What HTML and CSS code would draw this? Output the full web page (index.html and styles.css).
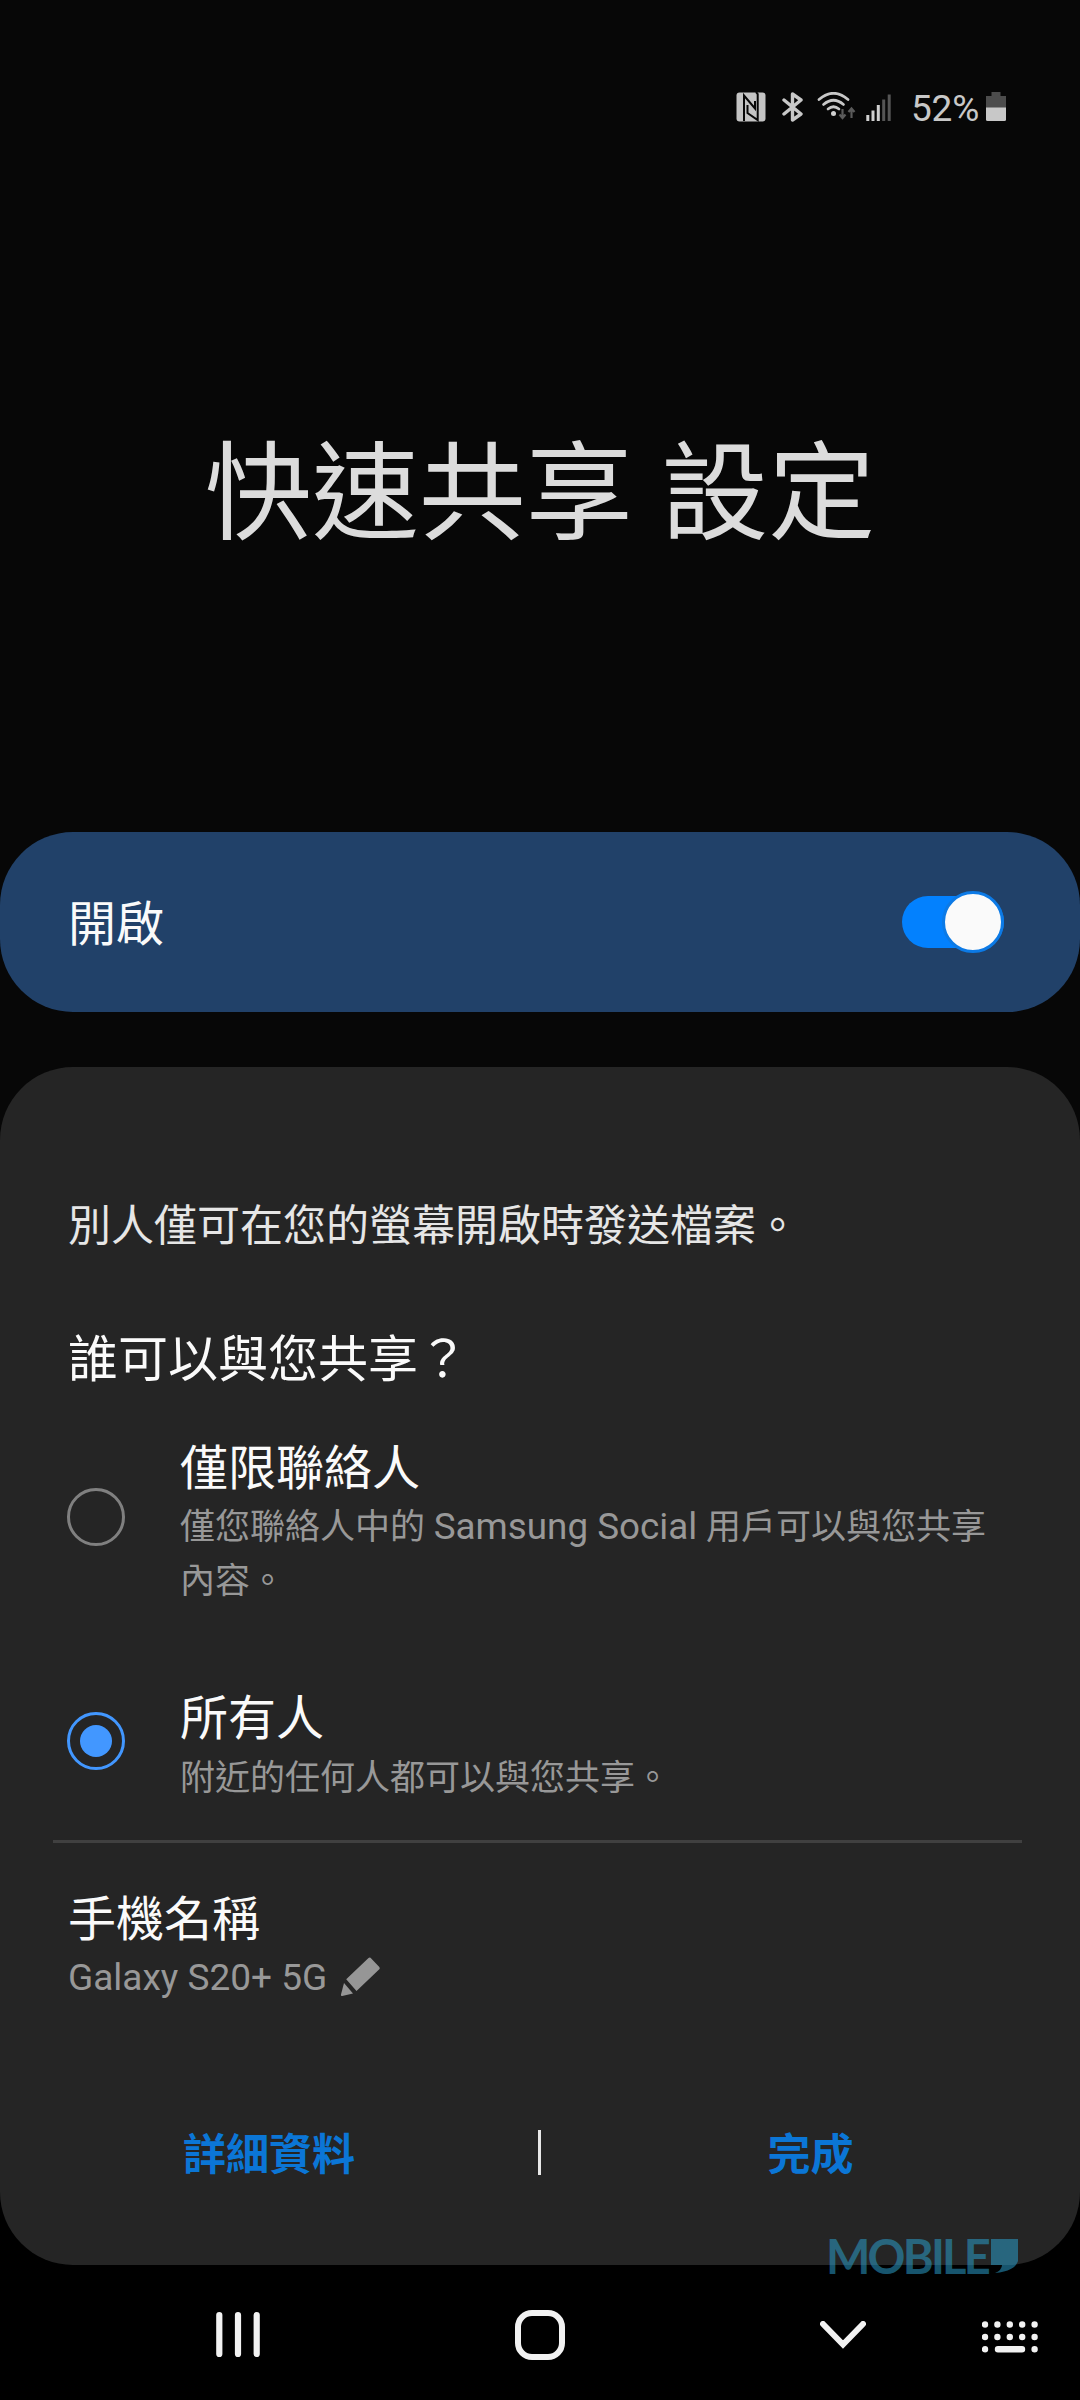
FILE: index.html
```html
<!DOCTYPE html>
<html lang="zh-Hant">
<head>
<meta charset="utf-8">
<title>快速共享 設定</title>
<link rel="stylesheet" href="styles.css">
</head>
<body>
<div class="screen">
  <header class="status-bar">
    <svg class="icon-nfc" width="30" height="30" viewBox="0 0 30 30">
      <rect x=".5" y=".5" width="29" height="29" rx="3" fill="#c4c4c4"/>
      <path d="M8 29V3.500L19 16.500V9M11.500 13V21L21.700 28V2L20 0" fill="none" stroke="#070707" stroke-width="2"/>
    </svg>
    <svg class="icon-bluetooth" width="22" height="30" viewBox="0 0 22 30">
      <path d="M2 8L19 22L10.500 28V2L19 8L2 22" fill="none" stroke="#c8c8c8" stroke-width="3.400" stroke-linejoin="round" stroke-linecap="round"/>
    </svg>
    <svg class="icon-wifi" width="39" height="30" viewBox="0 0 39 30">
      <g fill="none" stroke="#c8c8c8" stroke-width="2.700" stroke-linecap="round">
        <path d="M2 7.500Q16.500-5 31 7.500"/>
        <path d="M6.500 12.500Q16.500 4 26.500 12.500"/>
        <path d="M11 17Q16.500 12.500 22 17"/>
      </g>
      <circle cx="16.500" cy="21.500" r="2.500" fill="#d0d0d0"/>
      <path d="M25.500 17V25M22.500 22.500L25.500 26L28.500 22.500M34.500 26V17M31.500 20L34.500 16.500L37.500 20" fill="none" stroke="#5a5a5a" stroke-width="2.200"/>
    </svg>
    <svg class="icon-signal" width="26" height="30" viewBox="0 0 26 30">
      <path d="M1.800 23V29M7 18.500V29M12.300 13V29" stroke="#d0d0d0" stroke-width="3"/>
      <path d="M17.700 7.500V29M23.200 2.500V29" stroke="#555" stroke-width="3"/>
    </svg>
    <span class="battery-level">52%</span>
    <svg class="icon-battery" width="20" height="30" viewBox="0 0 20 30">
      <path d="M5.500 0H14.500V4H20V16H0V4H5.500Z" fill="#4c4c4c"/>
      <path d="M0 15.500H20V27.500Q20 29 18.500 29H1.500Q0 29 0 27.500Z" fill="#c8c8c8"/>
    </svg>
  </header>

  <h1 class="title">快速共享 設定</h1>

  <section class="master-switch">
    <span class="switch-label">開啟</span>
    <span class="toggle"><span class="thumb"></span></span>
  </section>

  <main class="card">
    <p class="notice">別人僅可在您的螢幕開啟時發送檔案。</p>
    <h2 class="question">誰可以與您共享？</h2>

    <div class="option option-contacts">
      <span class="radio"></span>
      <div class="option-text">
        <div class="label">僅限聯絡人</div>
        <div class="hint">僅您聯絡人中的 <span class="latin">Samsung Social</span> 用戶可以與您共享<br>內容。</div>
      </div>
    </div>

    <div class="option option-everyone">
      <span class="radio checked"></span>
      <div class="option-text">
        <div class="label">所有人</div>
        <div class="hint">附近的任何人都可以與您共享。</div>
      </div>
    </div>

    <hr class="divider">

    <div class="device">
      <div class="label">手機名稱</div>
      <div class="device-name">
        <span>Galaxy S20+ 5G</span>
        <svg width="40" height="40" viewBox="0 0 40 40" fill="#969696">
          <path d="M30.500.800Q29.500 0 28.500 1L6.200 22.200L16.500 34L39.300 12.300Q40.200 11.300 39.300 10Z"/>
          <path d="M4 26L13 36.500L2.200 39Q.700 39.200 1 37.500Z"/>
        </svg>
      </div>
    </div>

    <div class="actions">
      <span class="action">詳細資料</span>
      <span class="separator"></span>
      <span class="action">完成</span>
    </div>

    <div class="watermark">
      <span class="brand">MOBILE</span>
      <svg width="27" height="35" viewBox="0 0 27 35"><path d="M0 0H27V22Q24 32 4 34Q11 31 11 26H0Z" fill="currentColor"/></svg>
    </div>
  </main>

  <nav class="nav-bar">
    <svg class="nav-recents" width="44" height="48" viewBox="0 0 44 48">
      <path d="M3.300 4V43M22 4V43M40.700 4V43" stroke="#f2f2f2" stroke-width="6.200" stroke-linecap="round"/>
    </svg>
    <svg class="nav-home" width="50" height="50" viewBox="0 0 50 50">
      <rect x="3" y="3" width="44" height="44" rx="14" fill="none" stroke="#f2f2f2" stroke-width="6"/>
    </svg>
    <svg class="nav-back" width="46" height="28" viewBox="0 0 46 28">
      <path d="M3 3L23 23.500L43 3" fill="none" stroke="#f2f2f2" stroke-width="6" stroke-linecap="round"/>
    </svg>
    <svg class="nav-keyboard" width="56" height="32" viewBox="0 0 56 32">
      <path d="M3 3.500H53M3 16H53" stroke="#f2f2f2" stroke-width="6.400" stroke-linecap="round" stroke-dasharray="0 12.400"/>
      <path d="M3 28.300H3.010M52.600 28.300H52.610M16 28.300H40" stroke="#f2f2f2" stroke-width="6.400" stroke-linecap="round"/>
    </svg>
  </nav>
</div>
</body>
</html>
```
FILE: styles.css
```css
* {
  box-sizing: border-box;
  margin: 0;
  padding: 0;
}

body {
  background: #000;
  color: #fafafa;
  font-family: Roboto, "Noto Sans CJK TC", sans-serif;
}

svg {
  display: block;
  flex: none;
}

.screen {
  width: 1080px;
  height: 2400px;
  display: flex;
  flex-direction: column;
  background: linear-gradient(#070707 0 1400px, #000 1400px);
  overflow: hidden;
}

.status-bar {
  height: 216px;
  padding: 0 74px 2px 0;
  display: flex;
  align-items: center;
  justify-content: flex-end;
}

.icon-bluetooth { margin-left: 16px; }
.icon-wifi { margin-left: 13px; }
.icon-signal { margin-left: 10px; }

.battery-level {
  width: 68px;
  margin: 0 7px 0 19px;
  padding-top: 3px;
  color: #c8c8c8;
  font-size: 37px;
  line-height: 44px;
  letter-spacing: -0.2px;
}

.title {
  height: 616px;
  padding-top: 199px;
  text-align: center;
  font-size: 107px;
  font-weight: 400;
  line-height: 160px;
  word-spacing: 2px;
  color: #dcdcdc;
}

.master-switch {
  height: 180px;
  flex: none;
  padding: 0 76px 0 68px;
  display: flex;
  align-items: center;
  justify-content: space-between;
  border-radius: 73px;
  background: #214169;
}

.switch-label {
  font-size: 48px;
  line-height: 60px;
  padding-top: 6px;
}

.toggle {
  width: 102px;
  height: 52px;
  display: flex;
  align-items: center;
  justify-content: flex-end;
  border-radius: 26px;
  background: #0381fe;
}

.thumb {
  width: 62px;
  height: 62px;
  flex: none;
  border: 3px solid #0c7ae6;
  border-radius: 50%;
  background: #fafafa;
}

.card {
  position: relative;
  height: 1198px;
  margin-top: 55px;
  flex: none;
  display: flex;
  flex-direction: column;
  border-radius: 73px;
  background: #252525;
}

.notice {
  margin: 129px 0 0 68px;
  font-size: 43px;
  line-height: 60px;
  color: #e6e6e6;
}

.question {
  margin: 74px 0 0 68px;
  font-size: 50px;
  font-weight: 400;
  line-height: 60px;
  white-space: nowrap;
}

.option {
  display: flex;
  align-items: center;
  padding-left: 67px;
  gap: 55px;
}

.option-contacts { margin-top: 49px; }
.option-everyone { margin-top: 81px; }

.radio {
  width: 58px;
  height: 58px;
  flex: none;
  display: grid;
  place-items: center;
  border: 3px solid #808080;
  border-radius: 50%;
}

.option-contacts .radio { margin-top: -14px; }
.option-everyone .radio { margin-top: -12px; }

.radio.checked { border-color: #4297ff; }

.radio.checked::before {
  content: "";
  width: 32px;
  height: 32px;
  border-radius: 50%;
  background: #4297ff;
}

.label {
  font-size: 48px;
  line-height: 60px;
}

.hint {
  width: 816px;
  margin-top: 2px;
  font-size: 35px;
  line-height: 53.5px;
  color: #989898;
}

.option-everyone .hint { padding-top: 1px; }

.latin {
  font-size: 36.8px;
  line-height: 1;
}

.divider {
  width: 969px;
  height: 3px;
  margin: 34px auto 0 53px;
  border: 0;
  background: #404040;
}

.device {
  margin: 47px 0 0 68px;
}

.device-name {
  display: flex;
  align-items: center;
  gap: 13px;
  height: 54px;
  padding-top: 1px;
  font-size: 37px;
  color: #989898;
}

.device-name span { padding-top: 1px; }

.actions {
  display: grid;
  grid-template-columns: 538px 3px 1fr;
  align-items: center;
  height: 60px;
  margin-top: 121px;
  text-align: center;
}

.action {
  font-size: 43px;
  font-weight: 700;
  line-height: 60px;
  color: #0b76d6;
}

.separator {
  height: 45px;
  margin-bottom: 5px;
  background: #e8e8e8;
}

.watermark {
  position: absolute;
  left: 826px;
  top: 1172px;
  display: flex;
  color: #2b9cc8;
  opacity: 0.55;
}

.brand {
  width: 165px;
  font-family: Lato, sans-serif;
  font-size: 47px;
  font-weight: 700;
  line-height: 35px;
  letter-spacing: -2.8px;
}

.nav-bar {
  height: 135px;
  flex: none;
  display: flex;
  align-items: center;
  padding: 5px 42px 0 216px;
  background: #000;
}

.nav-home { margin-left: 255px; }
.nav-back { margin-left: 255px; }
.nav-keyboard { margin: 3px 0 0 auto; }
```
